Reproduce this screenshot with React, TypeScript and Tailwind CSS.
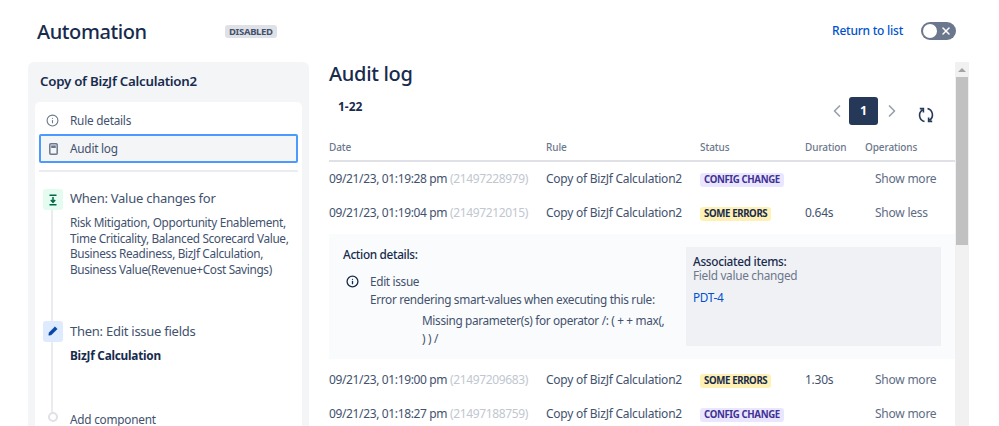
import { ChevronLeft, ChevronRight, Info, X } from "lucide-react";

const GRID = "grid grid-cols-[217px_154px_105px_60px_90px] items-center";

function Badge({ kind }: { kind: "config" | "errors" }) {
  return kind === "config" ? (
    <span className="inline-block rounded-[3px] bg-[#eae6ff] px-[4px] text-[9.7px] leading-[14px] font-bold tracking-[-0.04em] text-[#403294] whitespace-nowrap">CONFIG CHANGE</span>
  ) : (
    <span className="inline-block rounded-[3px] bg-[#fff0b3] px-[4px] text-[9.7px] leading-[14px] font-bold tracking-[-0.04em] text-[#172b4d] whitespace-nowrap">SOME ERRORS</span>
  );
}

function Row({ date, id, kind, dur, op }: { date: string; id: string; kind: "config" | "errors"; dur: string; op: string }) {
  return (
    <div className={`${GRID} h-[34px] text-[12px] text-[#42526e]`}>
      <div className="whitespace-nowrap tracking-[-0.03em]">
        {date} <span className="text-[#c1c7d0]">({id})</span>
      </div>
      <div className="whitespace-nowrap tracking-[-0.02em]">Copy of BizJf Calculation2</div>
      <div><Badge kind={kind} /></div>
      <div className="tracking-[-0.02em]">{dur}</div>
      <div className="pl-[10px] text-[#5e6c84] whitespace-nowrap tracking-[-0.02em]">{op}</div>
    </div>
  );
}

export default function App() {
  return (
    <div className="h-[426px] w-[999px] overflow-hidden bg-white font-['Noto_Sans',sans-serif] text-[#172b4d]">
      <header className="flex h-[62px] items-center pl-[37px] pr-[43px]">
        <h1 className="mt-[2px] w-[188px] text-[20px] leading-[28px] font-medium tracking-[-0.02em]">Automation</h1>
        <span className="rounded-[3px] bg-[#dfe1e6] px-[4px] text-[9.5px] leading-[13px] font-bold tracking-[-0.035em] text-[#42526e]">DISABLED</span>
        <a className="ml-auto text-[12px] font-medium tracking-[-0.02em] text-[#0052cc]">Return to list</a>
        <div className="ml-[18px] flex h-[18px] w-[35px] items-center justify-between rounded-full bg-[#6b778c] px-[2px]">
          <div className="h-[14px] w-[14px] rounded-full bg-white" />
          <X size={12} strokeWidth={3} className="mr-[2px] text-white" />
        </div>
      </header>

      <div className="flex pl-[28px]">
        <aside className="relative h-[400px] w-[281px] shrink-0 rounded-t-[6px] bg-[#f4f5f7] px-[7px]">
          <div className="flex h-[40px] items-center px-[5px] text-[13.3px] font-semibold tracking-[-0.02em]">Copy of BizJf Calculation2</div>
          <div className="h-[360px] rounded-t-[5px] bg-white px-[4px] pt-[6px] text-[11.8px] tracking-[-0.02em] text-[#42526e]">
            <div className="flex h-[25px] items-center pl-[7px]">
              <Info size={13} className="text-[#6b778c]" />
              <span className="ml-[11px]">Rule details</span>
            </div>
            <div className="mt-[1px] flex h-[29px] items-center rounded-[2px] border-2 border-[#4c9aff] bg-[#f4f5f7] pl-[8px]">
              <svg width="9" height="12" viewBox="0 0 9 12" className="shrink-0">
                <rect x=".8" y=".8" width="7.4" height="10.4" rx="1" fill="none" stroke="#6b778c" strokeWidth="1.5" />
                <rect x="2.2" y="2.4" width="4.6" height="2.6" fill="#6b778c" />
              </svg>
              <span className="ml-[12px]">Audit log</span>
            </div>
            <div className="mt-[7px] h-[2px] bg-[#ebecf0]" />

            <div className="relative mt-[16px] pl-[31px]">
              <div className="absolute left-[4px] top-[1px] z-10 flex h-[21px] w-[20px] items-center justify-center rounded-[3px] bg-[#e3fcef]">
                <svg width="10" height="12" viewBox="0 0 10 12" fill="none" stroke="#006644" strokeWidth="1.5">
                  <path d="M1.5 1.2h7M5 3v5M2.8 6l2.2 2.3L7.2 6M1.5 10.8h7" />
                </svg>
              </div>
              <div className="text-[13px] leading-[20px] tracking-[-0.02em]">When: Value changes for</div>
              <div className="mt-[7px] text-[11.8px] leading-[15.7px] tracking-[-0.028em] whitespace-nowrap">
                Risk Mitigation, Opportunity Enablement,<br />
                Time Criticality, Balanced Scorecard Value,<br />
                Business Readiness, BizJf Calculation,<br />
                Business Value(Revenue+Cost Savings)
              </div>
            </div>

            <div className="relative mt-[43px] pl-[31px]">
              <div className="absolute left-[4px] top-0 z-10 flex h-[21px] w-[20px] items-center justify-center rounded-[3px] bg-[#deebff]">
                <svg width="10" height="10" viewBox="0 0 10 10" fill="#0747a6" stroke="#0747a6" strokeWidth=".6" strokeLinejoin="round">
                  <path d="M7 .8L9.2 3 3.4 8.8.8 9.2 1.2 6.6z" />
                </svg>
              </div>
              <div className="text-[13px] leading-[20px] tracking-[-0.02em]">Then: Edit issue fields</div>
              <div className="mt-[6px] text-[11.8px] leading-[16px] font-bold text-[#172b4d]">BizJf Calculation</div>
            </div>

            <div className="relative mt-[49px] pl-[31px] leading-[14px]">
              <div className="absolute left-[9px] top-0 z-10 h-[10px] w-[10px] rounded-full border-2 border-[#dfe1e6] bg-white" />
              Add component
            </div>
          </div>
          <div className="absolute left-[23px] top-[148px] h-[204px] w-[2px] bg-[#ebecf0]" />
        </aside>

        <main className="ml-[20px] w-[626px] shrink-0">
          <h2 className="h-[24px] text-[20px] leading-[24px] font-medium tracking-[-0.015em]">Audit log</h2>
          <div className="flex h-[50px] items-start">
            <span className="ml-[9px] mt-[13px] text-[12px] leading-[16px] font-bold">1-22</span>
            <div className="ml-auto mr-[21px] mt-[11px] flex items-center">
              <ChevronLeft size={20} className="text-[#97a0af]" />
              <div className="ml-[2px] mr-[4px] flex h-[28px] w-[29px] items-center justify-center rounded-[3px] bg-[#253858] text-[12.5px] font-bold text-white">1</div>
              <ChevronRight size={20} className="text-[#97a0af]" />
              <svg width="16" height="16" viewBox="0 0 16 16" fill="none" stroke="#253858" strokeWidth="1.6" className="ml-[16px] mt-[8px]">
                <path d="M6.5 14.6A6.6 6.6 0 0 1 4.4 2.8M1.8 1.6h3.6v3.8" />
                <path d="M9.5 1.4A6.6 6.6 0 0 1 11.6 13.2M14.2 14.4h-3.6v-3.8" />
              </svg>
            </div>
          </div>
          <div className={`${GRID} h-[26px] border-b-2 border-[#dfe1e6] pb-[2px] text-[10px] font-medium tracking-[-0.01em] text-[#6b778c]`}>
            <div>Date</div>
            <div>Rule</div>
            <div>Status</div>
            <div>Duration</div>
            <div>Operations</div>
          </div>
          <Row date="09/21/23, 01:19:28 pm" id="21497228979" kind="config" dur="" op="Show more" />
          <Row date="09/21/23, 01:19:04 pm" id="21497212015" kind="errors" dur="0.64s" op="Show less" />
          <div className="mt-[4px] flex h-[125px] bg-[#fafbfc] pl-[14px] pt-[12px]">
            <div className="w-[343px] text-[11.8px] leading-[16px] tracking-[-0.028em] text-[#42526e]">
              <div className="font-medium text-[#172b4d]">Action details:</div>
              <div className="mt-[11px] flex">
                <Info size={13} strokeWidth={2.4} className="mt-[2px] ml-[3px] shrink-0 text-[#172b4d]" />
                <div className="ml-[11px]">
                  <div>Edit issue</div>
                  <div className="mt-[2px] whitespace-nowrap">Error rendering smart-values when executing this rule:</div>
                  <div className="ml-[52px] mt-[4px] leading-[18px] whitespace-nowrap">Missing parameter(s) for operator /: ( + + max(,<br />) ) /</div>
                </div>
              </div>
            </div>
            <div className="mt-[1px] h-[99px] w-[255px] bg-[#f0f1f4] px-[7px] pt-[7px] text-[11.8px] leading-[14px] tracking-[-0.025em]">
              <div className="font-medium">Associated items:</div>
              <div className="text-[#6b778c]">Field value changed</div>
              <div className="mt-[8px] text-[#0052cc]">PDT-4</div>
            </div>
          </div>
          <div className="mt-[4px]">
            <Row date="09/21/23, 01:19:00 pm" id="21497209683" kind="errors" dur="1.30s" op="Show more" />
            <Row date="09/21/23, 01:18:27 pm" id="21497188759" kind="config" dur="" op="Show more" />
          </div>
        </main>

        <div className="h-[364px] w-[14px] shrink-0 bg-[#f1f1f1]">
          <div className="flex h-[15px] items-center justify-center">
            <div className="h-0 w-0 border-x-[4px] border-b-[4px] border-x-transparent border-b-[#a3a3a3]" />
          </div>
          <div className="mx-auto h-[168px] w-[12px] bg-[#c1c1c1]" />
        </div>
      </div>
    </div>
  );
}
